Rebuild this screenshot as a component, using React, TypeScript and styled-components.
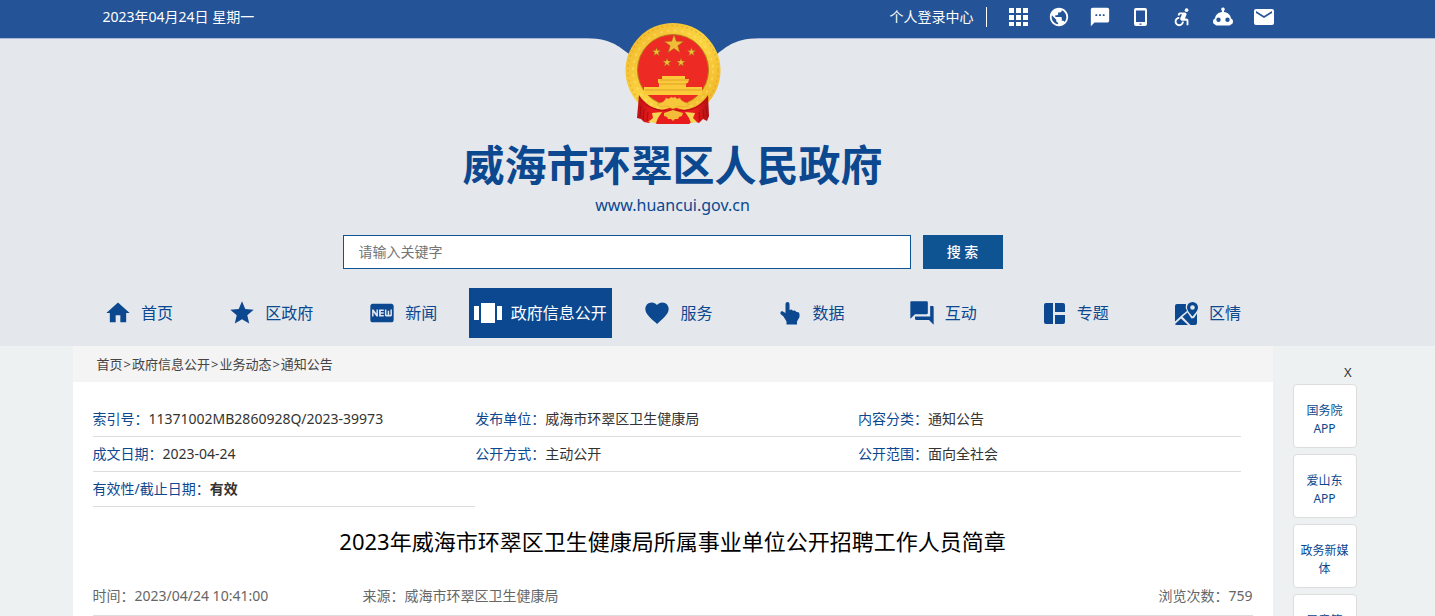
import React from "react";
import styled, { createGlobalStyle, css } from "styled-components";
import {
  MdPublic, MdTextsms, MdAccessibleForward,
  MdHome, MdStar, MdFiberNew, MdFavorite, MdForum,
} from "react-icons/md";

const navy = "#0b4890";

const Global = createGlobalStyle`
  *, *::before, *::after { box-sizing: border-box; }
  body {
    margin: 0;
    background: #edf1f2;
    font-family: "Noto Sans", "Noto Sans CJK SC", sans-serif;
    font-size: 14px;
    line-height: 20px;
    color: #333;
  }
  a { color: inherit; text-decoration: none; }
  button, input { font: inherit; }
  h1, h2, p, ul, dl, dd { margin: 0; padding: 0; }
`;

const Page = styled.div`
  height: 100vh;
  overflow: hidden;
`;

const Columns = styled.div`
  display: grid;
  grid-template-columns: minmax(0, 29fr) minmax(0, 1200px) minmax(0, 65fr);
`;

const Center = styled.div`
  grid-column: 2;
  min-width: 0;
`;

const TopBar = styled.header`
  background: #245397;
  color: #fff;
  border-bottom: 1px solid #a9b8d6;
`;

const TopRow = styled(Center)`
  display: flex;
  justify-content: space-between;
  align-items: center;
  height: 38px;
  padding: 0 0 4px 30px;
`;

const Tools = styled.nav`
  display: flex;
  align-items: center;
`;

const Login = styled.a`
  padding-right: 12px;
  margin-right: 20px;
  border-right: 1px solid #fff;
`;

const ToolIcons = styled.div`
  display: flex;
  gap: 19px;
  margin-right: -2px;
  svg { display: block; width: 22px; height: 22px; }
`;

const Banner = styled.div`
  background: #e4e7ec;
`;

const Brand = styled.div`
  display: flex;
  flex-direction: column;
  align-items: center;
  color: ${navy};
`;

const Crest = styled.svg`
  display: block;
  width: 184px;
  height: 88px;
  overflow: visible;
`;

const SiteName = styled.h1`
  margin-top: 10px;
  font-size: 42px;
  line-height: 56px;
  font-weight: 700;
`;

const SiteUrl = styled.p`
  font-size: 16px;
  line-height: 24px;
`;

const Search = styled.form`
  display: flex;
  justify-content: center;
  gap: 12px;
  padding: 18px 0 19px;
`;

const SearchInput = styled.input`
  width: 568px;
  height: 34px;
  padding: 0 15px 2px;
  border: 1px solid #0e5392;
  border-radius: 0;
  background: #fff;
  color: #333;
  &::placeholder { color: #757575; opacity: 1; }
`;

const SearchButton = styled.button`
  width: 80px;
  height: 34px;
  border: 0;
  background: #0e5392;
  color: #fff;
  font-weight: 500;
`;

const Menu = styled.nav`
  display: flex;
  padding-bottom: 8px;
`;

const MenuItem = styled.a<{ $active?: boolean }>`
  flex: 1 1 0;
  display: flex;
  align-items: center;
  justify-content: center;
  gap: 9px;
  height: 50px;
  font-size: 16px;
  white-space: nowrap;
  color: ${navy};
  svg { display: block; flex: none; width: 28px; height: 28px; }
  ${(p) => p.$active && css`
    flex: 0 0 143px;
    background: ${navy};
    color: #fff;
  `}
`;

const Crumbs = styled.nav`
  display: flex;
  gap: 1px;
  height: 36px;
  padding: 0 24px;
  background: #f4f4f4;
  font-size: 13px;
  line-height: 36px;
  color: #444;
`;

const Article = styled.main`
  padding: 20px 20px 40px;
  background: #fff;
`;

const Facts = styled.dl`
  display: grid;
  grid-template-columns: repeat(3, 33%);
`;

const Fact = styled.div`
  display: flex;
  height: 35px;
  line-height: 34px;
  border-bottom: 1px solid #ddd;
  dt { color: ${navy}; }
`;

const Title = styled.h2`
  padding: 16px 0 27px;
  font-size: 22px;
  line-height: 36px;
  font-weight: 400;
  text-align: center;
  color: #000;
`;

const Meta = styled.div`
  display: grid;
  grid-template-columns: 270px 1fr auto;
  padding-bottom: 9px;
  border-bottom: 1px solid #ddd;
  color: #666;
`;

const Side = styled.aside`
  grid-column: 3;
  width: 84px;
  height: 0;
  padding: 16px 0 0 20px;
`;

const Close = styled.button`
  display: block;
  margin: 0 5px 2px auto;
  padding: 0;
  border: 0;
  background: none;
  font-size: 13px;
  line-height: 20px;
  color: #333;
`;

const SideLink = styled.a`
  display: flex;
  align-items: center;
  justify-content: center;
  height: 64px;
  margin-bottom: 6px;
  padding: 8px 5px 0;
  border: 1px solid #ddd;
  border-radius: 4px;
  background: #fff;
  color: ${navy};
  font-size: 12px;
  line-height: 18px;
  text-align: center;
`;

const starPoints = (cx: number, cy: number, r: number) =>
  Array.from({ length: 10 }, (_, i) => {
    const a = -Math.PI / 2 + (i * Math.PI) / 5;
    const q = i % 2 ? r * 0.4 : r;
    return `${(cx + q * Math.cos(a)).toFixed(2)},${(cy + q * Math.sin(a)).toFixed(2)}`;
  }).join(" ");

const Emblem = () => (
  <Crest viewBox="0 39 184 88" aria-hidden="true">
    <defs>
      <linearGradient id="gold" x1="0" y1="0" x2="1" y2="1">
        <stop offset="0" stopColor="#f0b62c" />
        <stop offset=".5" stopColor="#fbd441" />
        <stop offset="1" stopColor="#eeb026" />
      </linearGradient>
      <linearGradient id="cloth" x1="0" y1="0" x2="1" y2="0">
        <stop offset="0" stopColor="#c01012" />
        <stop offset=".2" stopColor="#e81c1c" />
        <stop offset=".8" stopColor="#e81c1c" />
        <stop offset="1" stopColor="#b31112" />
      </linearGradient>
    </defs>
    <path d="M2 38C26 38 34 43 48 54H136C150 43 158 38 182 38Z" fill="#245397" />
    <circle cx="92" cy="70.500" r="47.500" fill="url(#gold)" />
    <circle cx="92" cy="70.500" r="45" fill="none" stroke="#d99318" strokeWidth="1.500" strokeDasharray="2 3" opacity=".4" />
    <circle cx="92" cy="70.500" r="40" fill="none" stroke="#fff08a" strokeWidth="2" strokeDasharray="3 4" opacity=".35" />
    <circle cx="92" cy="70" r="35.500" fill="#ee2a24" stroke="#b8791a" strokeWidth="1" />
    <g fill="#f0bd37" stroke="#a65f18" strokeWidth=".5">
      <polygon points={starPoints(93, 44.500, 10)} />
      <polygon points={starPoints(75.500, 52, 4.600)} />
      <polygon points={starPoints(110.500, 52, 4.600)} />
      <polygon points={starPoints(86, 62.500, 4.600)} />
      <polygon points={starPoints(100, 62.500, 4.600)} />
    </g>
    <path d="M81 76H104V79H108L107 83H105V87H121V95H63V87H78V83H77V79H81Z" fill="#fbc939" />
    <path d="M79 80H107M79 84H106M64 90H120" stroke="#d99a22" strokeWidth=".8" />
    <path d="M58 95C63 103 72 109 81 110L92 107L103 110C113 109 122 103 127 95L128 116L126 121L122 119L118 123L112 121L108 124H76L71 121L68 123L63 122L60 119L56 118Z" fill="url(#cloth)" />
    <path d="M58 97C65 108 76 112 92 110C108 112 120 108 127 97" fill="none" stroke="#b51214" strokeWidth="1.200" />
    <path d="M82 102L84 100L85 98L88 99L90 97L92 98L94 97L96 99L99 98L100 100L103 102L108 104L104 107L98 106L92 109L86 106L80 107L76 104Z" fill="#f8c63a" stroke="#dd9e24" strokeWidth=".5" />
    <path d="M71 113L81 112L77 118L75 123L67 122L72 118Z M114 113L104 112L108 118L110 123L116 122L112 118Z" fill="#f5d552" />
    <path d="M83 113L92 110L102 113L101 116L98 117L97 119L94 119L92 121L90 119L87 119L86 117L83 116Z" fill="#f3bb37" />
    <path d="M60 106L59 118M63 109L62 120M67 112L66 121M118 112L119 121M122 109L123 118M125 106L126 117" stroke="#9d0d10" strokeWidth=".8" />
  </Crest>
);

const GridIcon = () => (
  <svg viewBox="0 0 22 22" fill="currentColor" aria-hidden="true">
    <path d="M2 2H7V7H2ZM9 2H14V7H9ZM16 2H21V7H16ZM2 9H7V14H2ZM9 9H14V14H9ZM16 9H21V14H16ZM2 16H7V20H2ZM9 16H14V20H9ZM16 16H21V20H16Z" />
  </svg>
);

const PhoneIcon = () => (
  <svg viewBox="0 0 22 22" fill="currentColor" aria-hidden="true">
    <path fillRule="evenodd" d="M6 2H15Q17 2 17 4V18Q17 20 15 20H6Q4 20 4 18V4Q4 2 6 2ZM6 4.500V16H15V4.500ZM9.500 17.500V18.800H11.500V17.500Z" />
  </svg>
);

const RobotIcon = () => (
  <svg viewBox="0 0 22 22" fill="currentColor" aria-hidden="true">
    <path fillRule="evenodd" d="M11 1.500A1.800 1.800 0 0 1 12 4.800V6C16 6.500 18.500 9 19 12.500C20.500 13 21 14 21 15.500S20.500 18 19 18.500Q18.500 19.500 17 19.500H5Q3.500 19.500 3 18.500C1.500 18 1 17 1 15.500S1.500 13 3 12.500C3.500 9 6 6.500 10 6V4.800A1.800 1.800 0 0 1 11 1.500ZM6.500 11.500A2.200 2.200 0 1 0 6.500 15.900A2.200 2.200 0 1 0 6.500 11.500ZM15.500 11.500A2.200 2.200 0 1 0 15.500 15.900A2.200 2.200 0 1 0 15.500 11.500Z" />
  </svg>
);

const MailIcon = () => (
  <svg viewBox="0 0 22 22" fill="currentColor" aria-hidden="true">
    <path fillRule="evenodd" d="M3 3H19Q21 3 21 5V17Q21 19 19 19H3Q1 19 1 17V5Q1 3 3 3ZM3 5V7L11 12L19 7V5L11 10Z" />
  </svg>
);

const CarouselIcon = () => (
  <svg viewBox="0 0 28 28" fill="currentColor" aria-hidden="true">
    <path d="M0 7H5V21H0ZM7 4H21V24H7ZM23 7H28V21H23Z" />
  </svg>
);

const HandIcon = () => (
  <svg viewBox="0 0 28 28" fill="currentColor" aria-hidden="true">
    <path d="M9.500 5Q9.500 3 11.500 3T13.500 5V11L15.500 10.500L17 11.800L19 11.500L20.500 13L22.500 13.200Q23.500 14 23.500 15.500V18L21 22.500V25.500H10.500V22.500L7.500 17.500L4.500 15V13L6 12L9.500 14Z" />
  </svg>
);

const TopicsIcon = () => (
  <svg viewBox="0 0 28 28" fill="currentColor" aria-hidden="true">
    <path d="M6 4H13V25H6Q4 25 4 23V6Q4 4 6 4Z M15 4H23Q25 4 25 6V13H15Z M15 16H25V23Q25 25 23 25H15Z" />
  </svg>
);

const MapPinIcon = () => (
  <svg viewBox="0 0 28 28" fill="currentColor" aria-hidden="true">
    <path d="M5 5H14Q13 9 15 12L10 16L3 22.500V7Q3 5 5 5Z" />
    <path d="M3 25L9 19.500L16 26H5Q3 26 3 25Z M10.500 17.800L15.500 13.500L19.500 19.500L22 19L25 14.500V24Q25 26 23 26H18.500Z" />
    <path fillRule="evenodd" d="M20.500 3A5.500 5.500 0 0 1 26 8.500C26 12 20.500 17.500 20.500 17.500S15 12 15 8.500A5.500 5.500 0 0 1 20.500 3ZM20.500 6.200A2.300 2.300 0 1 0 20.500 10.800A2.300 2.300 0 1 0 20.500 6.200Z" />
  </svg>
);

const tools = [
  { label: "应用", Icon: GridIcon },
  { label: "语言", Icon: MdPublic },
  { label: "短信", Icon: MdTextsms },
  { label: "手机", Icon: PhoneIcon },
  { label: "无障碍", Icon: MdAccessibleForward },
  { label: "智能问答", Icon: RobotIcon },
  { label: "邮箱", Icon: MailIcon },
];

const menu = [
  { label: "首页", Icon: MdHome },
  { label: "区政府", Icon: MdStar },
  { label: "新闻", Icon: MdFiberNew },
  { label: "政府信息公开", Icon: CarouselIcon, active: true },
  { label: "服务", Icon: MdFavorite },
  { label: "数据", Icon: HandIcon },
  { label: "互动", Icon: MdForum },
  { label: "专题", Icon: TopicsIcon },
  { label: "区情", Icon: MapPinIcon },
];

const facts: { name: string; value: React.ReactNode }[] = [
  { name: "索引号：", value: "11371002MB2860928Q/2023-39973" },
  { name: "发布单位：", value: "威海市环翠区卫生健康局" },
  { name: "内容分类：", value: "通知公告" },
  { name: "成文日期：", value: "2023-04-24" },
  { name: "公开方式：", value: "主动公开" },
  { name: "公开范围：", value: "面向全社会" },
  { name: "有效性/截止日期：", value: <strong>有效</strong> },
];

const sideLinks = ["国务院APP", "爱山东APP", "政务新媒体", "民意箱APP"];
const crumbs = ["首页", "政府信息公开", "业务动态", "通知公告"];

export default function App() {
  return (
    <Page>
      <Global />
      <TopBar>
        <Columns>
          <TopRow>
            <span>2023年04月24日 星期一</span>
            <Tools aria-label="工具">
              <Login href="#">个人登录中心</Login>
              <ToolIcons>
                {tools.map(({ label, Icon }) => (
                  <a key={label} href="#" aria-label={label}><Icon /></a>
                ))}
              </ToolIcons>
            </Tools>
          </TopRow>
        </Columns>
      </TopBar>
      <Banner>
        <Columns>
          <Center>
            <Brand>
              <Emblem />
              <SiteName>威海市环翠区人民政府</SiteName>
              <SiteUrl>www.huancui.gov.cn</SiteUrl>
            </Brand>
            <Search onSubmit={(e) => e.preventDefault()}>
              <SearchInput type="text" aria-label="搜索" placeholder="请输入关键字" />
              <SearchButton type="submit">搜 索</SearchButton>
            </Search>
            <Menu>
              {menu.map(({ label, Icon, active }) => (
                <MenuItem key={label} href="#" $active={active}><Icon />{label}</MenuItem>
              ))}
            </Menu>
          </Center>
        </Columns>
      </Banner>
      <Columns>
        <Center>
          <Crumbs>
            {crumbs.map((c, i) => (
              <React.Fragment key={c}>{i > 0 && <span>&gt;</span>}<a href="#">{c}</a></React.Fragment>
            ))}
          </Crumbs>
          <Article>
            <Facts>
              {facts.map((f) => (
                <Fact key={f.name}><dt>{f.name}</dt><dd>{f.value}</dd></Fact>
              ))}
            </Facts>
            <Title>2023年威海市环翠区卫生健康局所属事业单位公开招聘工作人员简章</Title>
            <Meta>
              <span>时间：2023/04/24 10:41:00</span>
              <span>来源：威海市环翠区卫生健康局</span>
              <span>浏览次数：759</span>
            </Meta>
          </Article>
        </Center>
        <Side>
          <Close type="button">X</Close>
          {sideLinks.map((s) => <SideLink key={s} href="#">{s}</SideLink>)}
        </Side>
      </Columns>
    </Page>
  );
}
